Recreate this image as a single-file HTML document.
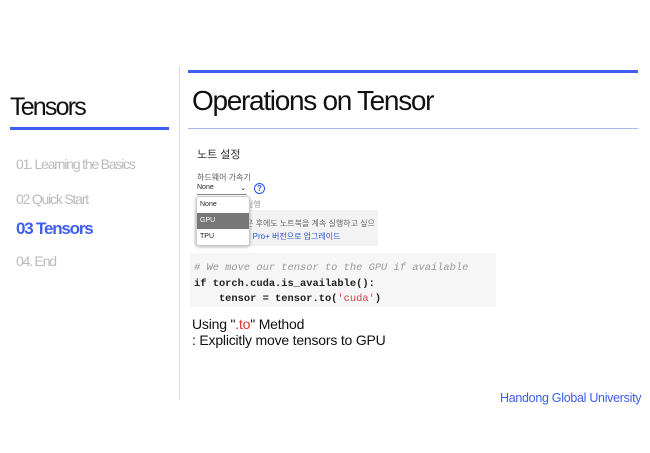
<!DOCTYPE html>
<html><head><meta charset="utf-8"><style>
body{margin:0;width:650px;height:453px;background:#fff;position:relative;overflow:hidden;font-family:"Liberation Sans","Noto Sans CJK KR",sans-serif}
.a{position:absolute;white-space:nowrap}
.nav{color:#bbb;font-size:14px;letter-spacing:-1.2px}
</style></head><body>
<div class="a" style="left:10px;top:93px;font-size:25px;letter-spacing:-1.8px;color:#111">Tensors</div>
<div class="a" style="left:10px;top:127px;width:159px;height:3px;background:#3d5ef0"></div>
<div class="a nav" style="left:16px;top:156px">01. Learning the Basics</div>
<div class="a nav" style="left:16px;top:191px">02 Quick Start</div>
<div class="a" style="left:16px;top:219px;font-size:17px;font-weight:bold;letter-spacing:-1.2px;color:#3d5ef0">03 Tensors</div>
<div class="a nav" style="left:16px;top:253px">04. End</div>
<div class="a" style="left:179px;top:66px;width:1px;height:334px;background:#ddd"></div>
<div class="a" style="left:188px;top:70px;width:450px;height:3px;background:#3d5ef0"></div>
<div class="a" style="left:192px;top:85px;font-size:28px;letter-spacing:-1.3px;color:#111">Operations on Tensor</div>
<div class="a" style="left:188px;top:128px;width:450px;height:1px;background:#a8b8f0"></div>
<div class="a" style="left:197px;top:146px;font-size:11px;color:#333">노트 설정</div>
<div class="a" style="left:197px;top:172px;font-size:8px;color:#555">하드웨어 가속기</div>
<div class="a" style="left:197px;top:184px;width:50px;height:10px;border-bottom:1px solid #888;font-size:7px;color:#222">None<span style="position:absolute;right:1px">⌄</span></div>
<div class="a" style="left:254px;top:183px;width:9px;height:9px;border:1.5px solid #2255dd;border-radius:50%;font-size:8px;font-weight:bold;color:#2255dd;text-align:center;line-height:9px">?</div>
<div class="a" style="left:194px;top:210px;width:184px;height:36px;background:#f3f3f3"></div>
<div class="a" style="left:246px;top:199px;font-size:8px;color:#999">실행</div>
<div class="a" style="left:246px;top:218px;font-size:8px;color:#666">은 후에도 노트북을 계속 실행하고 싶으</div>
<div class="a" style="left:246px;top:231px;font-size:8px;color:#2255dd">o Pro+ 버전으로 업그레이드</div>
<div class="a" style="left:196px;top:196px;width:52px;height:48px;background:#fff;border:1px solid #ccc;border-radius:3px;box-shadow:0 1px 3px rgba(0,0,0,.3);font-size:7px;color:#222">
<div style="height:16px;line-height:16px;padding-left:3px">None</div>
<div style="height:16px;line-height:16px;padding-left:3px;background:#777;color:#fff">GPU</div>
<div style="height:16px;line-height:16px;padding-left:3px">TPU</div></div>
<div class="a" style="left:190px;top:253px;width:306px;height:54px;background:#f6f6f6"></div>
<div class="a" style="left:194px;top:261px;font-family:'Liberation Mono',monospace;font-size:10.4px;line-height:15.5px;color:#222;font-weight:bold;white-space:pre"><i style="color:#999;font-weight:normal"># We move our tensor to the GPU if available</i>
if torch.cuda.is_available():
    tensor = tensor.to(<span style="color:#c44;font-weight:normal">'cuda'</span>)</div>
<div class="a" style="left:192px;top:316px;font-size:14px;color:#111;line-height:16px;letter-spacing:-0.2px">Using "<span style="color:#d33">.to</span>" Method<br>: Explicitly move tensors to GPU</div>
<div class="a" style="left:500px;top:391px;font-size:12.5px;color:#3d5ef0;letter-spacing:-0.3px">Handong Global University</div>
</body></html>
